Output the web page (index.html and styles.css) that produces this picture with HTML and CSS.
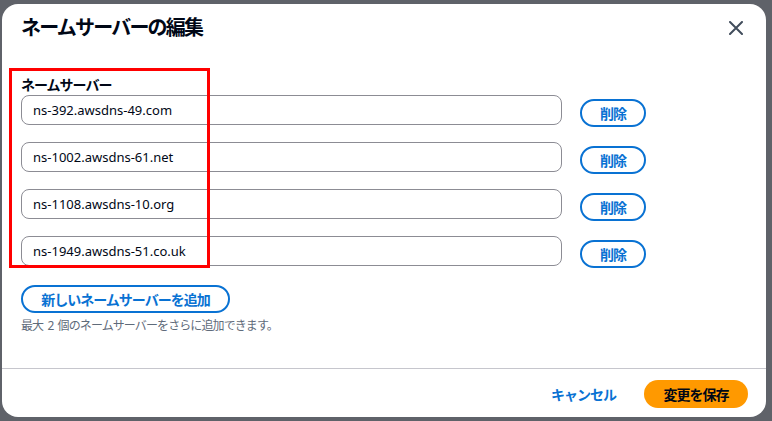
FILE: index.html
```html
<!DOCTYPE html>
<html lang="ja">
<head>
    <meta charset="UTF-8">
    <meta name="viewport" content="width=device-width, initial-scale=1.0">
    <title>ネームサーバーの編集</title>
    <link rel="stylesheet" href="styles.css">
</head>
<body>
    <div class="backdrop">
        <div class="modal">
            <div class="modal-header">
                <h2>ネームサーバーの編集</h2>
                <button class="close-btn" aria-label="閉じる">
                    <svg width="14" height="14" viewBox="0 0 14 14">
                        <path d="M1 1 L13 13 M13 1 L1 13" stroke="#414d5c" stroke-width="2" fill="none" stroke-linecap="round"/>
                    </svg>
                </button>
            </div>
            <div class="modal-body">
                <div class="field-label">ネームサーバー</div>
                <div class="ns-list">
                    <div class="ns-row">
                        <input type="text" class="ns-input" value="ns-392.awsdns-49.com">
                        <button class="btn-outline">削除</button>
                    </div>
                    <div class="ns-row">
                        <input type="text" class="ns-input" value="ns-1002.awsdns-61.net">
                        <button class="btn-outline">削除</button>
                    </div>
                    <div class="ns-row">
                        <input type="text" class="ns-input" value="ns-1108.awsdns-10.org">
                        <button class="btn-outline">削除</button>
                    </div>
                    <div class="ns-row">
                        <input type="text" class="ns-input" value="ns-1949.awsdns-51.co.uk">
                        <button class="btn-outline">削除</button>
                    </div>
                </div>
                <button class="btn-outline btn-add">新しいネームサーバーを追加</button>
                <p class="hint">最大 2 個のネームサーバーをさらに追加できます。</p>
            </div>
            <div class="modal-footer">
                <button class="btn-link">キャンセル</button>
                <button class="btn-primary">変更を保存</button>
            </div>
            <div class="highlight"></div>
        </div>
    </div>
</body>
</html>
```

FILE: styles.css
```css
body {
    margin: 0;
    font-family: "Noto Sans", "Noto Sans CJK JP", sans-serif;
    background-color: #5f6269;
    height: 421px;
    overflow: hidden;
}
.backdrop {
    padding: 4px 0 0 2px;
}
.modal {
    position: relative;
    width: 764px;
    height: 413px;
    background: white;
    border-radius: 16px;
    display: flex;
    flex-direction: column;
}
.modal-header {
    display: flex;
    justify-content: space-between;
    align-items: center;
    padding: 10px 23px 0 19px;
}
.modal-header h2 {
    margin: 0;
    font-size: 20px;
    line-height: 28px;
    letter-spacing: -1.8px;
    font-weight: 700;
    color: #000716;
}
.close-btn {
    border: none;
    background: none;
    padding: 0;
    width: 14px;
    height: 14px;
    display: flex;
}
.modal-body {
    flex: 1;
    padding: 33px 0 0 19px;
}
.field-label {
    font-size: 14px;
    line-height: 20px;
    font-weight: 700;
    letter-spacing: -1px;
    color: #000716;
}
.ns-list {
    display: flex;
    flex-direction: column;
    gap: 15px;
}
.ns-row {
    display: flex;
    align-items: flex-start;
    gap: 18px;
}
.ns-input {
    width: 541px;
    height: 30px;
    box-sizing: border-box;
    border: 1px solid #8c8c94;
    border-radius: 8px;
    padding: 0 11px;
    font-family: "Noto Sans", sans-serif;
    font-size: 13px;
    color: #000716;
}
.btn-outline {
    margin-top: 4px;
    height: 28px;
    box-sizing: border-box;
    border: 2px solid #0972d3;
    border-radius: 20px;
    background: white;
    color: #0972d3;
    font-family: "Noto Sans", "Noto Sans CJK JP", sans-serif;
    font-size: 14px;
    font-weight: 700;
    letter-spacing: -1px;
    width: 66px;
    padding: 0;
}
.btn-add {
    margin-top: 17px;
    width: 209px;
    display: block;
}
.hint {
    margin: 5px 0 0;
    font-size: 12px;
    line-height: 16px;
    letter-spacing: -0.9px;
    word-spacing: 2px;
    color: #5f6b7a;
}
.modal-footer {
    border-top: 1px solid #c6c6cd;
    display: flex;
    justify-content: flex-end;
    align-items: center;
    gap: 28px;
    padding: 11px 18px 9px 0;
}
.btn-link {
    border: none;
    background: none;
    padding: 0;
    color: #0972d3;
    font-family: "Noto Sans", "Noto Sans CJK JP", sans-serif;
    font-size: 14px;
    font-weight: 700;
    letter-spacing: -1px;
}
.btn-primary {
    height: 28px;
    width: 104px;
    border: none;
    border-radius: 20px;
    background-color: #ff9900;
    color: #000716;
    font-family: "Noto Sans", "Noto Sans CJK JP", sans-serif;
    font-size: 14px;
    font-weight: 700;
    letter-spacing: -1px;
    padding: 0;
}
.highlight {
    position: absolute;
    left: 7px;
    top: 64px;
    width: 201px;
    height: 200px;
    box-sizing: border-box;
    border: 3px solid #ff0000;
}
```
